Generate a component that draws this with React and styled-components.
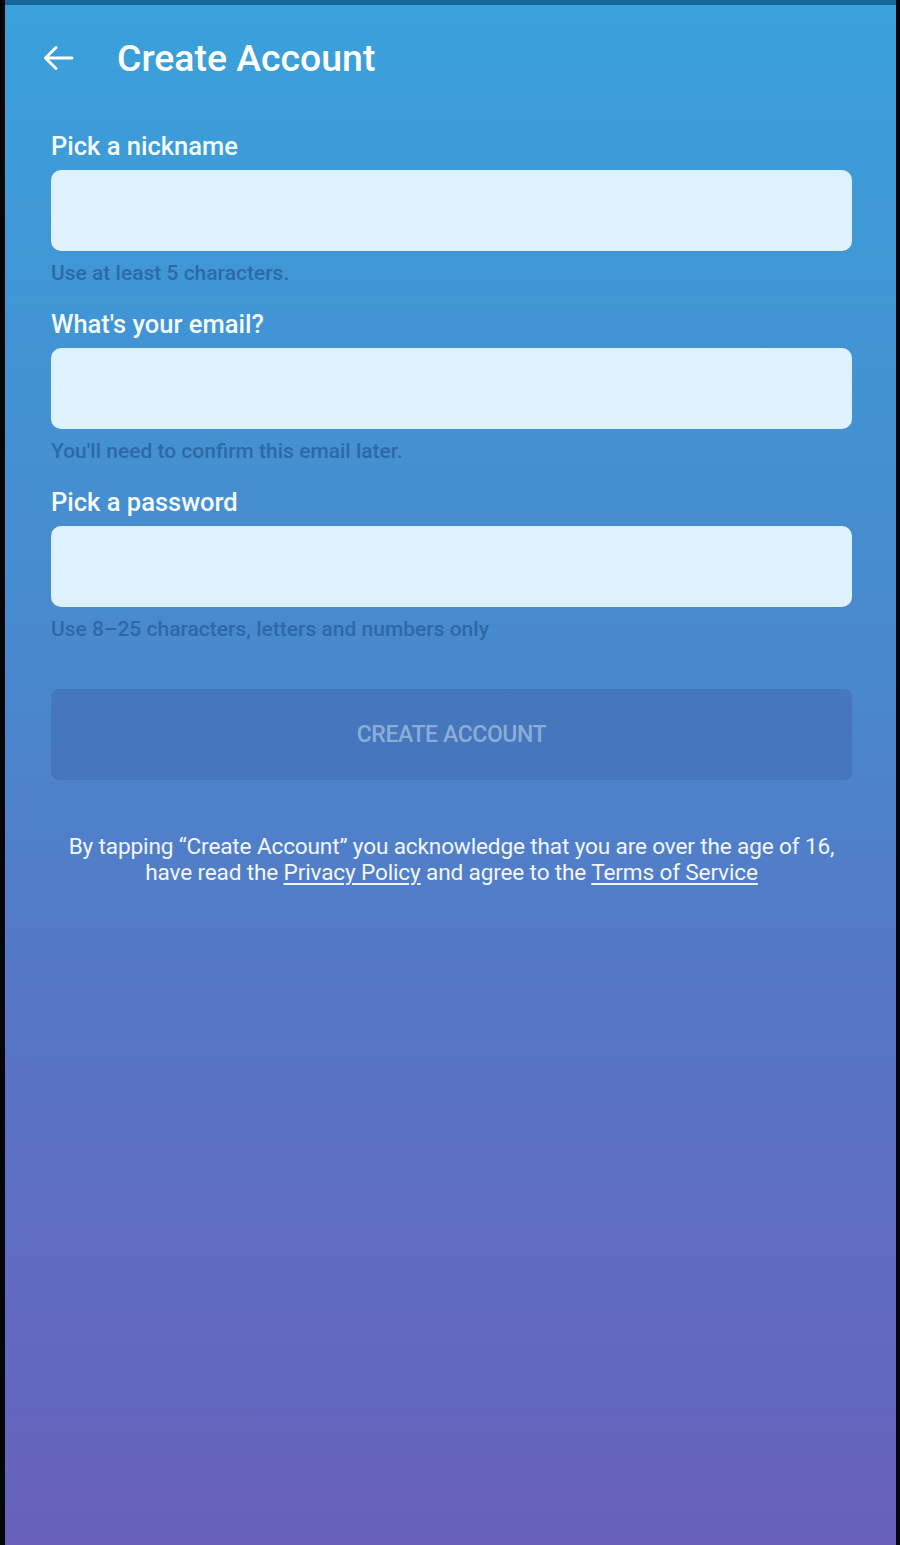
import styled, { createGlobalStyle } from 'styled-components';

const GlobalStyle = createGlobalStyle`
  html, body {
    margin: 0;
    padding: 0;
    background: #000;
  }
  body {
    font-family: Roboto, 'Liberation Sans', sans-serif;
  }
`;

const fields = [
  { label: 'Pick a nickname', hint: 'Use at least 5 characters.', type: 'text' },
  { label: "What's your email?", hint: "You'll need to confirm this email later.", type: 'email' },
  { label: 'Pick a password', hint: 'Use 8–25 characters, letters and numbers only', type: 'password' },
];

const BackArrow = () => (
  <svg width='32' height='28' viewBox='0 0 32 28' fill='none'>
    <path
      d='M30 14H4M14 3.5L3.5 14 14 24.5'
      stroke='#fff'
      strokeWidth='3'
      strokeLinecap='round'
      strokeLinejoin='round'
    />
  </svg>
);

const App = () => {
  return (
    <>
      <GlobalStyle />
      <Frame>
        <StatusStrip />
        <Screen>
          <Header>
            <BackButton aria-label='Back'>
              <BackArrow />
            </BackButton>
            <Title>Create Account</Title>
          </Header>
          <Form onSubmit={(e) => e.preventDefault()}>
            {fields.map((f, i) => (
              <Field key={f.label} $first={i === 0}>
                <Label>{f.label}</Label>
                <Input type={f.type} />
                <Hint>{f.hint}</Hint>
              </Field>
            ))}
            <SubmitButton type='submit' disabled>
              Create Account
            </SubmitButton>
            <Terms>
              By tapping “Create Account” you acknowledge that you are over the age of 16,
              <br />
              have read the <TermsLink href='#'>Privacy Policy</TermsLink> and agree to the{' '}
              <TermsLink href='#'>Terms of Service</TermsLink>
            </Terms>
          </Form>
        </Screen>
      </Frame>
    </>
  );
};

const Frame = styled.div`
  width: 900px;
  height: 1545px;
  box-sizing: border-box;
  border-left: 5px solid #050608;
  border-right: 4px solid #050608;
  display: flex;
  flex-direction: column;
  overflow: hidden;
`;

const StatusStrip = styled.div`
  height: 5px;
  flex-shrink: 0;
  background: #15679c;
`;

const Screen = styled.div`
  flex: 1;
  display: flex;
  flex-direction: column;
  background: linear-gradient(
    180deg,
    #3aa1da 0%,
    #4a87cd 45%,
    #5874c5 68%,
    #6860bb 100%
  );
`;

const Header = styled.header`
  height: 106px;
  display: flex;
  align-items: center;
  padding-left: 37px;
  gap: 43px;
`;

const BackButton = styled.button`
  border: 0;
  background: none;
  padding: 0;
  display: flex;
  cursor: pointer;
`;

const Title = styled.h1`
  margin: 0;
  font-size: 37.4px;
  font-weight: 500;
  color: #fff;
`;

const Form = styled.form`
  display: flex;
  flex-direction: column;
  padding: 21px 44px 0 46px;
`;

const Field = styled.div`
  display: flex;
  flex-direction: column;
  margin-top: ${({ $first }) => ($first ? '0' : '26px')};
`;

const Label = styled.label`
  font-size: 25.5px;
  line-height: 28px;
  font-weight: 500;
  color: #f4fbff;
  margin-bottom: 10px;
`;

const Input = styled.input`
  height: 81px;
  box-sizing: border-box;
  border: 0;
  border-radius: 10px;
  background: #def2fd;
  padding: 0 20px;
  font-size: 22px;
  font-family: inherit;
  outline: none;
`;

const Hint = styled.span`
  margin-top: 11px;
  font-size: 21px;
  line-height: 22px;
  font-weight: 500;
  color: #2a5f9d;
  opacity: 0.8;
`;

const SubmitButton = styled.button`
  margin-top: 49px;
  height: 91px;
  border: 0;
  border-radius: 8px;
  background: #4676bb;
  color: rgba(200, 220, 245, 0.55);
  font-family: inherit;
  font-size: 23px;
  font-weight: 500;
  text-transform: uppercase;
  letter-spacing: -0.4px;
  cursor: default;
`;

const Terms = styled.p`
  margin: 54px 0 0;
  text-align: center;
  font-size: 22.6px;
  line-height: 26px;
  color: #f2f6fc;
  letter-spacing: -0.15px;
`;

const TermsLink = styled.a`
  color: inherit;
  text-decoration: underline;
  text-underline-offset: 3px;
`;

export default App;
